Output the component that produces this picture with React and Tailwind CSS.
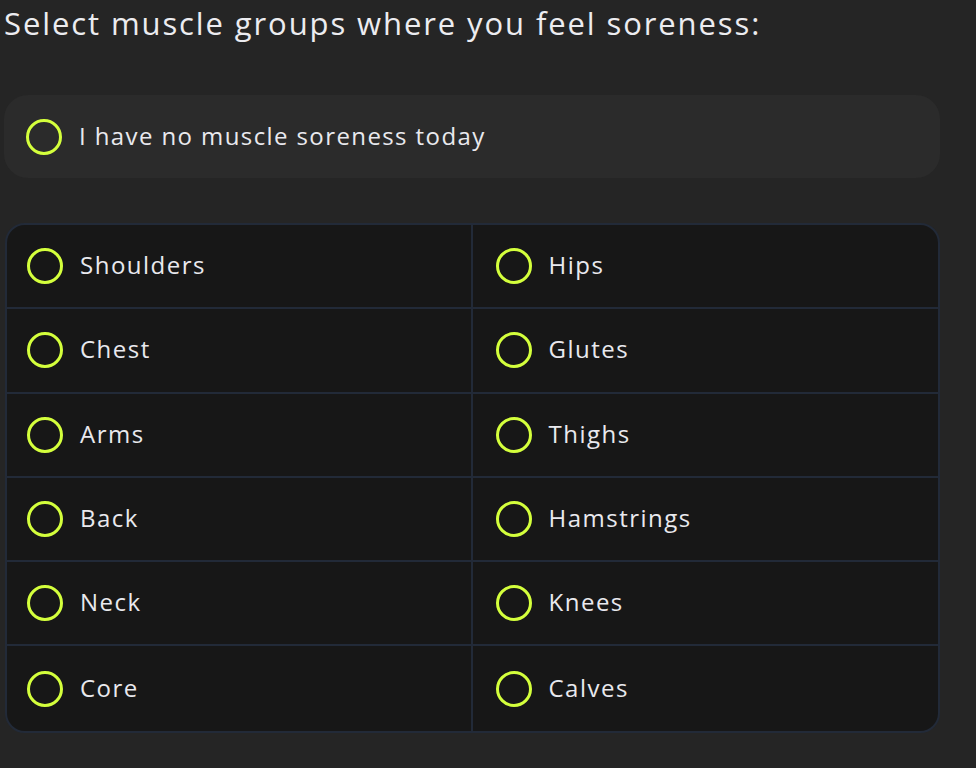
const left = ['Shoulders', 'Chest', 'Arms', 'Back', 'Neck', 'Core']
const right = ['Hips', 'Glutes', 'Thighs', 'Hamstrings', 'Knees', 'Calves']

function Ring() {
  return <span className="block w-[36px] h-[36px] rounded-full border-[3px] border-[#d4ff3c] shrink-0" />
}

function Cell({ label, last, side }) {
  return (
    <div
      className={`flex items-center h-[84.3px] ${side === 'l' ? 'pl-[20px] border-r-2 border-[#222a38]' : 'pl-[23px]'} ${last ? '' : 'border-b-2 border-[#222a38]'}`}
    >
      <Ring />
      <span className="ml-[17px] text-[24px] text-[#e9e9ee] tracking-[1.5px] -mt-[2px]">{label}</span>
    </div>
  )
}

export default function App() {
  return (
    <div className="min-h-[768px] bg-[#252525] pl-[4px] pr-[36px] pt-[2px] pb-[36px]" style={{ fontFamily: '"Open Sans", "Noto Sans", sans-serif' }}>
      <h1 className="text-[31px] leading-[42px] text-[#ececf0] tracking-[1.9px]">Select muscle groups where you feel soreness:</h1>

      <div className="mt-[51px] h-[83px] rounded-[24px] bg-[#2b2b2b] flex items-center pl-[22px]">
        <Ring />
        <span className="ml-[17px] text-[24px] leading-[30px] text-[#e9e9ee] tracking-[1.4px] -mt-[2px]">I have no muscle soreness today</span>
      </div>

      <div className="mt-[45px] ml-[1px] rounded-[20px] border-[2px] border-[#222a38] bg-[#171717] overflow-hidden grid grid-cols-2">
        {left.map((l, i) => (
          <div key={l} className="contents">
            <Cell label={l} side="l" last={i === left.length - 1} />
            <Cell label={right[i]} side="r" last={i === left.length - 1} />
          </div>
        ))}
      </div>
    </div>
  )
}
